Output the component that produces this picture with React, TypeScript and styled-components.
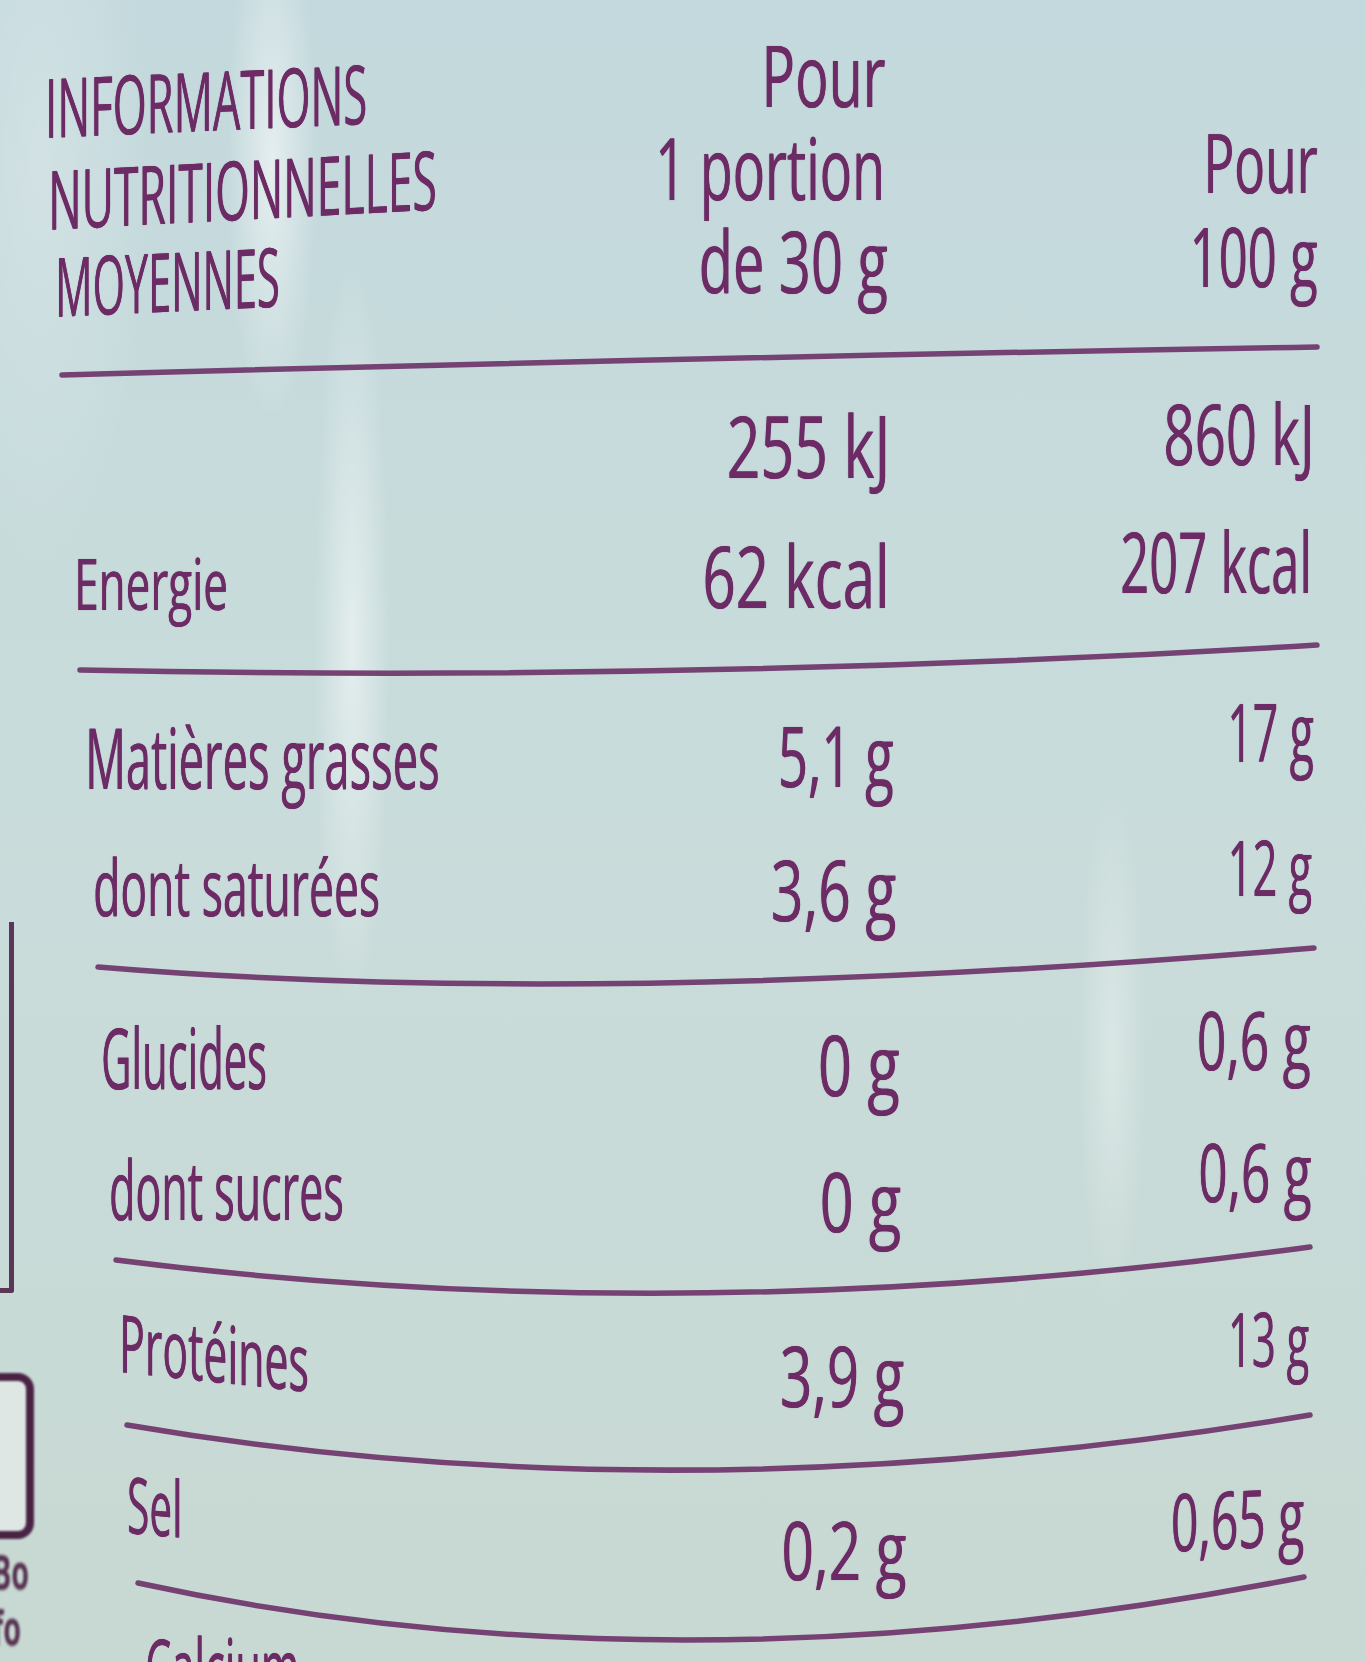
import styled, { createGlobalStyle } from "styled-components";

const INK = "#6c2b64";
const RULE_INK = "#6b3168";

type Line = { t: string; size: number; sx: number; mt: number; off: number; tilt?: number };
type BlockData = { h: number; label: Line[]; c2: Line[]; c3: Line[] };
type RuleData = { h: number; a: [number, number]; m: [number, number]; b: [number, number] };

const GlobalStyle = createGlobalStyle`
  html, body {
    margin: 0;
    padding: 0;
  }
  body {
    width: 1365px;
    height: 1662px;
    overflow: hidden;
    background: #c7dadb;
    font-family: "Open Sans", "DejaVu Sans", sans-serif;
  }
`;

const Label = styled.main`
  display: flex;
  width: 1365px;
  height: 1662px;
  overflow: hidden;
  background:
    radial-gradient(ellipse 45px 260px at 272px 160px, rgba(255, 255, 255, 0.55), rgba(255, 255, 255, 0)),
    radial-gradient(ellipse 38px 380px at 352px 640px, rgba(255, 255, 255, 0.5), rgba(255, 255, 255, 0)),
    radial-gradient(ellipse 34px 260px at 1112px 1050px, rgba(255, 255, 255, 0.32), rgba(255, 255, 255, 0)),
    radial-gradient(ellipse 110px 420px at 40px 160px, rgba(255, 255, 255, 0.22), rgba(255, 255, 255, 0)),
    linear-gradient(180deg, #c4d9dd 0%, #c9dcdb 50%, #c8d9d3 100%);
`;

const Gutter = styled.aside`
  flex: none;
  width: 40px;
  display: flex;
  flex-direction: column;
  overflow: hidden;
`;

const Bracket = styled.div`
  flex: none;
  margin-top: 922px;
  width: 9px;
  height: 366px;
  border-right: 5px solid #5b3656;
  border-bottom: 5px solid #5b3656;
  border-bottom-right-radius: 3px;
  filter: blur(0.7px);
`;

const Badge = styled.div`
  flex: none;
  margin-top: 80px;
  margin-left: -16px;
  width: 34px;
  height: 150px;
  border: 8px solid #4a2344;
  border-radius: 16px;
  background: #dfe7e4;
  filter: blur(0.8px);
`;

const Scrap = styled.span`
  display: block;
  margin-top: 10px;
  margin-left: -8px;
  font-size: 48px;
  line-height: 46px;
  font-weight: 700;
  color: #56304f;
  transform: scaleX(0.6);
  transform-origin: left center;
  filter: blur(1.4px);
  white-space: nowrap;
`;

const Table = styled.section`
  flex: none;
  width: 1325px;
  display: flex;
  flex-direction: column;
`;

const Block = styled.div<{ $h: number }>`
  flex: none;
  height: ${(p) => p.$h}px;
  display: grid;
  grid-template-columns: 460px 410px 410px;
  align-items: start;
`;

const Cell = styled.div<{ $end?: boolean }>`
  min-width: 0;
  display: flex;
  flex-direction: column;
  align-items: ${(p) => (p.$end ? "flex-end" : "flex-start")};
`;

const Txt = styled.span<{ $size: number; $sx: number; $mt: number; $off: number; $end?: boolean; $tilt: number }>`
  display: block;
  flex: none;
  white-space: nowrap;
  font-size: ${(p) => p.$size}px;
  line-height: 1;
  font-weight: 500;
  color: ${INK};
  text-shadow: 0.7px 0 0 ${INK}, 0 0 1.5px rgba(108, 43, 100, 0.45);
  margin-top: ${(p) => p.$mt}px;
  ${(p) => (p.$end ? `margin-right: ${p.$off}px;` : `margin-left: ${p.$off}px;`)}
  transform-origin: ${(p) => (p.$end ? "right center" : "left center")};
  transform: skewY(${(p) => p.$tilt}deg) scaleX(${(p) => p.$sx});
`;

const RuleSvg = styled.svg<{ $h: number }>`
  display: block;
  flex: none;
  width: 1325px;
  height: ${(p) => p.$h}px;
  overflow: visible;
`;

const blocks: BlockData[] = [
  {
    h: 340,
    label: [
      { t: "INFORMATIONS", size: 82, sx: 0.532, mt: 65, off: 5, tilt: -2.5 },
      { t: "NUTRITIONNELLES", size: 82, sx: 0.542, mt: 10, off: 8, tilt: -3 },
      { t: "MOYENNES", size: 82, sx: 0.507, mt: 5, off: 15, tilt: -2.6 },
    ],
    c2: [
      { t: "Pour", size: 86, sx: 0.648, mt: 31, off: 25 },
      { t: "1 portion", size: 86, sx: 0.625, mt: 7, off: 25 },
      { t: "de 30 g", size: 86, sx: 0.651, mt: 7, off: 22 },
    ],
    c3: [
      { t: "Pour", size: 82, sx: 0.626, mt: 120, off: 3 },
      { t: "100 g", size: 82, sx: 0.62, mt: 12, off: 3 },
    ],
  },
  {
    h: 260,
    label: [{ t: "Energie", size: 72, sx: 0.611, mt: 166, off: 34 }],
    c2: [
      { t: "255 kJ", size: 86, sx: 0.687, mt: 22, off: 20 },
      { t: "62 kcal", size: 86, sx: 0.677, mt: 44, off: 20 },
    ],
    c3: [
      { t: "860 kJ", size: 85, sx: 0.642, mt: 10, off: 6 },
      { t: "207 kcal", size: 85, sx: 0.596, mt: 43, off: 8 },
    ],
  },
  {
    h: 260,
    label: [
      { t: "Matières grasses", size: 84, sx: 0.539, mt: 35, off: 45 },
      { t: "dont saturées", size: 78, sx: 0.57, mt: 48, off: 53 },
    ],
    c2: [
      { t: "5,1 g", size: 85, sx: 0.617, mt: 32, off: 17 },
      { t: "3,6 g", size: 84, sx: 0.678, mt: 50, off: 14 },
    ],
    c3: [
      { t: "17 g", size: 80, sx: 0.556, mt: 11, off: 6 },
      { t: "12 g", size: 76, sx: 0.57, mt: 58, off: 8 },
    ],
  },
  {
    h: 255,
    label: [
      { t: "Glucides", size: 84, sx: 0.497, mt: 25, off: 61 },
      { t: "dont sucres", size: 83, sx: 0.518, mt: 47, off: 69 },
    ],
    c2: [
      { t: "0 g", size: 84, sx: 0.708, mt: 32, off: 11 },
      { t: "0 g", size: 83, sx: 0.715, mt: 52, off: 9 },
    ],
    c3: [
      { t: "0,6 g", size: 81, sx: 0.638, mt: 8, off: 9 },
      { t: "0,6 g", size: 80, sx: 0.642, mt: 52, off: 9 },
    ],
  },
  {
    h: 110,
    label: [{ t: "Protéines", size: 80, sx: 0.535, mt: 1, off: 79, tilt: 6 }],
    c2: [{ t: "3,9 g", size: 84, sx: 0.672, mt: 33, off: 6 }],
    c3: [{ t: "13 g", size: 75, sx: 0.555, mt: 1, off: 11 }],
  },
  {
    h: 105,
    label: [{ t: "Sel", size: 78, sx: 0.52, mt: -1, off: 87, tilt: 5 }],
    c2: [{ t: "0,2 g", size: 80, sx: 0.709, mt: 44, off: 4 }],
    c3: [{ t: "0,65 g", size: 80, sx: 0.6, mt: 9, off: 16, tilt: -3 }],
  },
  {
    h: 40,
    label: [{ t: "Calcium", size: 80, sx: 0.52, mt: -4, off: 105 }],
    c2: [],
    c3: [],
  },
];

const rules: RuleData[] = [
  { h: 40, a: [22, 35], m: [660, 19], b: [1277, 7] },
  { h: 40, a: [40, 30], m: [660, 30], b: [1277, 5] },
  { h: 50, a: [58, 27], m: [610, 43], b: [1274, 8] },
  { h: 55, a: [76, 15], m: [660, 48], b: [1270, 2] },
  { h: 55, a: [87, 15], m: [660, 60], b: [1270, 5] },
  { h: 60, a: [98, 13], m: [660, 70], b: [1264, 7] },
];

const Rule = ({ rule }: { rule: RuleData }) => {
  const { a, m, b, h } = rule;
  // control point so the curve passes through m at t = 0.5
  const cx = 2 * m[0] - (a[0] + b[0]) / 2;
  const cy = 2 * m[1] - (a[1] + b[1]) / 2;
  return (
    <RuleSvg $h={h} viewBox={`0 0 1325 ${h}`}>
      <path
        d={`M${a[0]} ${a[1]} Q${cx} ${cy} ${b[0]} ${b[1]}`}
        fill="none"
        stroke={RULE_INK}
        strokeWidth={5.5}
        strokeLinecap="round"
        opacity={0.9}
      />
    </RuleSvg>
  );
};

const Column = ({ lines, end }: { lines: Line[]; end?: boolean }) => (
  <Cell $end={end}>
    {lines.map((line, index) => (
      <Txt
        key={index}
        $size={line.size}
        $sx={line.sx}
        $mt={line.mt}
        $off={line.off}
        $end={end}
        $tilt={line.tilt ?? 0}
      >
        {line.t}
      </Txt>
    ))}
  </Cell>
);

const App = () => {
  return (
    <>
      <GlobalStyle />
      <Label>
        <Gutter>
          <Bracket />
          <Badge />
          <Scrap>Bo</Scrap>
          <Scrap>fo</Scrap>
        </Gutter>
        <Table>
          {blocks.map((block, index) => (
            <div key={index} style={{ display: "contents" }}>
              <Block $h={block.h}>
                <Column lines={block.label} />
                <Column lines={block.c2} end />
                <Column lines={block.c3} end />
              </Block>
              {rules[index] ? <Rule rule={rules[index]} /> : null}
            </div>
          ))}
        </Table>
      </Label>
    </>
  );
};

export default App;
